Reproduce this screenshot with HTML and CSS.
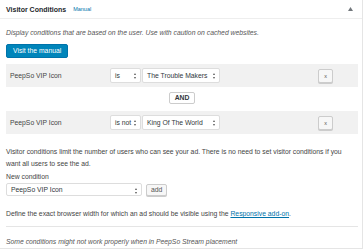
FILE: index.html
```html
<!DOCTYPE html>
<html lang="en">
<head>
    <meta charset="UTF-8">
    <title>Visitor Conditions</title>
    <link rel="stylesheet" href="styles.css">
</head>
<body>
    <div class="postbox">
        <div class="postbox-head">
            <h2>Visitor Conditions</h2>
            <a href="#" class="manual-link">Manual</a>
            <span class="toggle">
                <svg width="5" height="4" viewBox="0 0 5 4"><path d="M0 4 L2.5 0 L5 4 Z" fill="#72777c"/></svg>
            </span>
        </div>
        <div class="postbox-body">
            <p class="desc">Display conditions that are based on the user. Use with caution on cached websites.</p>
            <a href="#" class="button-primary">Visit the manual</a>

            <div class="cond-row">
                <span class="cond-name">PeepSo VIP Icon</span>
                <span class="select sel-op">is<i class="arrows"></i></span>
                <span class="select sel-val">The Trouble Makers<i class="arrows"></i></span>
                <span class="button-small remove">x</span>
            </div>
            <div class="and-wrap"><span class="button-small and">AND</span></div>
            <div class="cond-row">
                <span class="cond-name">PeepSo VIP Icon</span>
                <span class="select sel-op">is not<i class="arrows"></i></span>
                <span class="select sel-val">King Of The World<i class="arrows"></i></span>
                <span class="button-small remove">x</span>
            </div>

            <p class="note">Visitor conditions limit the number of users who can see your ad. There is no need to set visitor conditions if you want all users to see the ad.</p>

            <div class="new-cond">
                <label>New condition</label>
                <div class="new-row">
                    <span class="select sel-new">PeepSo VIP Icon<i class="arrows"></i></span>
                    <span class="button-small add">add</span>
                </div>
            </div>

            <p class="define">Define the exact browser width for which an ad should be visible using the <a href="#">Responsive add-on</a>.</p>
            <hr>
            <p class="desc foot">Some conditions might not work properly when in PeepSo Stream placement</p>
        </div>
    </div>
</body>
</html>
```

FILE: styles.css
```css
html, body {
    margin: 0;
    padding: 0;
    background: #fff;
}

body {
    font-family: "Liberation Sans", Arial, sans-serif;
    font-size: 6.8px;
    color: #444;
}

.postbox {
    box-sizing: border-box;
    width: 363px;
    height: 249px;
    border: 1px solid #e5e5e5;
    border-top: none;
    border-left: none;
}

.postbox-head {
    display: flex;
    align-items: center;
    height: 18px;
    padding: 0 6px;
    border-bottom: 1px solid #eee;
}

.postbox-head h2 {
    margin: 0;
    font-size: 7px;
    font-weight: bold;
    color: #23282d;
}

.manual-link {
    margin-left: 7px;
    font-size: 5.5px;
    color: #0073aa;
    text-decoration: none;
}

.toggle {
    margin-left: auto;
    margin-right: 3px;
    display: flex;
}

.postbox-body {
    padding: 9px 4px 0 6px;
}

.desc {
    margin: 0;
    line-height: 10px;
    font-style: italic;
    color: #555;
}

.button-primary {
    display: inline-block;
    margin-top: 6px;
    height: 14px;
    box-sizing: border-box;
    padding: 0 6px;
    line-height: 12px;
    border: 1px solid #0073aa;
    border-radius: 2px;
    background: #0085ba;
    color: #fff;
    text-decoration: none;
}

.cond-row {
    display: flex;
    align-items: center;
    height: 23px;
    margin-top: 6px;
    padding: 0 4px;
    background: #f1f1f1;
}

.cond-name {
    width: 100px;
}

.select {
    position: relative;
    box-sizing: border-box;
    height: 15px;
    line-height: 13px;
    padding: 0 10px 0 4px;
    border: 1px solid #ddd;
    border-radius: 2px;
    background: #fff;
    color: #32373c;
    white-space: nowrap;
}

.arrows {
    position: absolute;
    right: 3px;
    top: 4px;
    width: 3px;
    height: 6px;
}

.arrows::before,
.arrows::after {
    content: "";
    position: absolute;
    left: 0;
    border-left: 1.5px solid transparent;
    border-right: 1.5px solid transparent;
}

.arrows::before {
    top: 0;
    border-bottom: 2px solid #555;
}

.arrows::after {
    bottom: 0;
    border-top: 2px solid #555;
}

.sel-op {
    width: 31px;
}

.sel-val {
    width: 78px;
    margin-left: 1px;
}

.button-small {
    display: inline-block;
    box-sizing: border-box;
    height: 14px;
    line-height: 12px;
    padding: 0 5px;
    border: 1px solid #ccc;
    border-radius: 2px;
    background: #f7f7f7;
    color: #555;
    box-shadow: 0 1px 0 #ccc;
}

.remove {
    margin-left: auto;
    margin-right: 21px;
    font-size: 5.5px;
}

.and-wrap {
    display: flex;
    justify-content: center;
    margin: 5px 0 7px;
}

.and {
    height: 12px;
    line-height: 10px;
    font-weight: bold;
    color: #32373c;
    background: #fff;
    box-shadow: none;
}

.note {
    max-width: 336px;
    margin: 12px 0 0;
    line-height: 12px;
    color: #444;
}

.new-cond {
    margin-top: 2px;
}

.new-cond label {
    display: block;
    line-height: 10px;
}

.new-row {
    display: flex;
    align-items: center;
    gap: 4px;
    margin-top: 1px;
}

.sel-new {
    width: 136px;
    height: 13px;
    line-height: 11px;
}

.add {
    height: 12px;
    line-height: 10px;
    padding: 0 4px;
}

.define {
    margin: 13px 0 0;
    line-height: 10px;
}

.define a {
    color: #0073aa;
}

hr {
    margin: 7px 0 0;
    border: none;
    border-top: 1px solid #e5e5e5;
}

.foot {
    margin-top: 10px;
}
```
